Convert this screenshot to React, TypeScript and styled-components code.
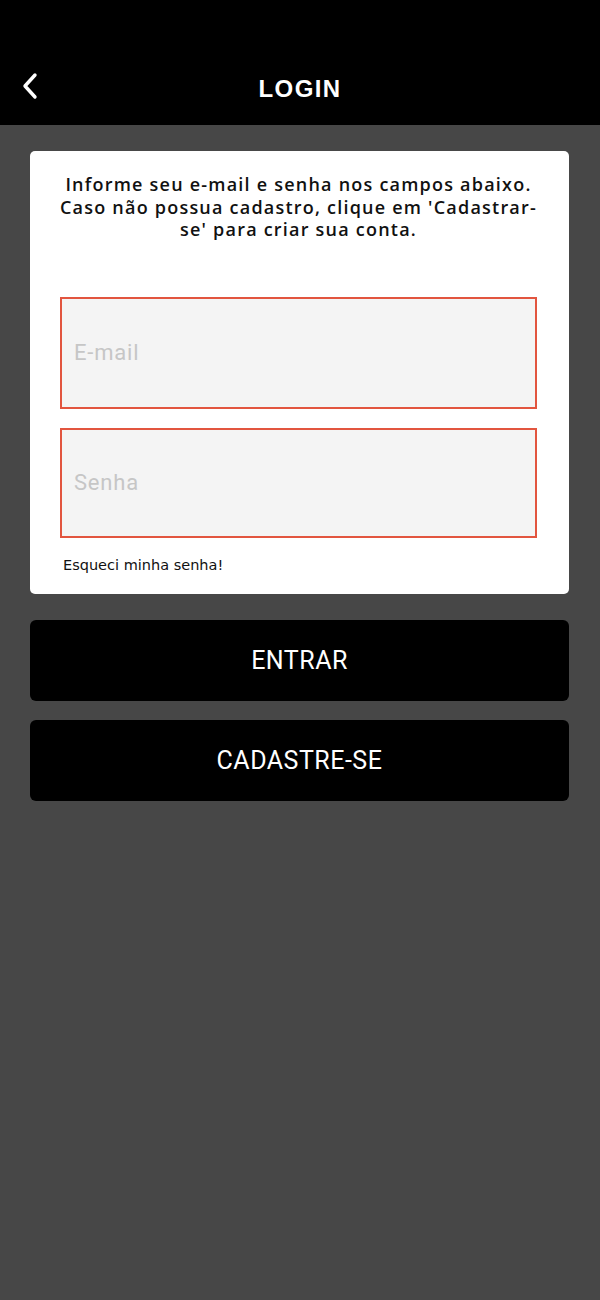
import styled, { createGlobalStyle } from 'styled-components';

const GlobalStyle = createGlobalStyle`
  html, body {
    margin: 0;
    padding: 0;
    background: #474747;
  }
  body {
    font-family: 'Liberation Sans', Arial, sans-serif;
  }
  * {
    box-sizing: border-box;
  }
`;

const Page = styled.div`
  width: 600px;
  min-height: 1300px;
  background: #474747;
  display: flex;
  flex-direction: column;
`;

const Header = styled.header`
  height: 125px;
  background: #000;
  display: flex;
  align-items: flex-end;
  padding-bottom: 22px;
  position: relative;
`;

const BackButton = styled.button`
  position: absolute;
  left: 15px;
  bottom: 22px;
  width: 30px;
  height: 34px;
  border: none;
  background: transparent;
  padding: 0;
  display: flex;
  align-items: center;
  justify-content: center;
  cursor: pointer;
`;

const Title = styled.h1`
  flex: 1;
  margin: 0;
  text-align: center;
  color: #fff;
  font-family: 'Liberation Sans', Arial, sans-serif;
  font-weight: 700;
  font-size: 24px;
  letter-spacing: 1.4px;
`;

const Content = styled.main`
  padding: 26px 31px 0 30px;
  display: flex;
  flex-direction: column;
  gap: 19px;
`;

const Card = styled.section`
  background: #fff;
  border-radius: 5px;
  padding: 22px 32px 21px 30px;
  display: flex;
  flex-direction: column;
  margin-bottom: 7px;
`;

const Intro = styled.p`
  margin: 0 -8px 56px;
  text-align: center;
  color: #111;
  font-family: 'Open Sans', 'Liberation Sans', sans-serif;
  font-weight: 600;
  font-size: 18px;
  line-height: 22.5px;
  letter-spacing: 1.22px;
`;

const Fields = styled.div`
  display: flex;
  flex-direction: column;
  gap: 19px;
`;

const Input = styled.input<{ $height: number }>`
  width: 100%;
  height: ${(p) => p.$height}px;
  background: #f4f4f4;
  border: 2px solid #e2553f;
  padding: 0 12px;
  font-family: 'Roboto', 'Liberation Sans', sans-serif;
  font-size: 22px;
  letter-spacing: 0.8px;
  color: #333;
  outline: none;

  &::placeholder {
    color: #c6c6c6;
  }
`;

const ForgotLink = styled.a`
  margin-top: 19px;
  margin-left: 3px;
  font-family: 'DejaVu Sans', 'Liberation Sans', sans-serif;
  font-size: 14.5px;
  color: #111;
  text-decoration: none;
`;

const ActionButton = styled.button`
  width: 100%;
  height: 81px;
  background: #000;
  border: none;
  border-radius: 6px;
  color: #fff;
  font-family: 'Roboto', 'Liberation Sans', sans-serif;
  font-size: 25px;
  font-weight: 400;
  letter-spacing: 0.5px;
  cursor: pointer;
`;

const ChevronLeft = () => (
  <svg width="18" height="28" viewBox="0 0 18 28" fill="none">
    <path d="M14 3 L4 14 L14 25" stroke="#fff" strokeWidth="3.4" strokeLinecap="round" strokeLinejoin="round" />
  </svg>
);

export default function App() {
  return (
    <>
      <GlobalStyle />
      <Page>
        <Header>
          <BackButton aria-label="Voltar">
            <ChevronLeft />
          </BackButton>
          <Title>LOGIN</Title>
        </Header>
        <Content>
          <Card>
            <Intro>
              Informe seu e-mail e senha nos campos abaixo.
              <br />
              Caso não possua cadastro, clique em 'Cadastrar-se' para criar sua conta.
            </Intro>
            <Fields>
              <Input $height={112} type="email" placeholder="E-mail" />
              <Input $height={110} type="password" placeholder="Senha" />
            </Fields>
            <ForgotLink href="#">Esqueci minha senha!</ForgotLink>
          </Card>
          <ActionButton>ENTRAR</ActionButton>
          <ActionButton>CADASTRE-SE</ActionButton>
        </Content>
      </Page>
    </>
  );
}
